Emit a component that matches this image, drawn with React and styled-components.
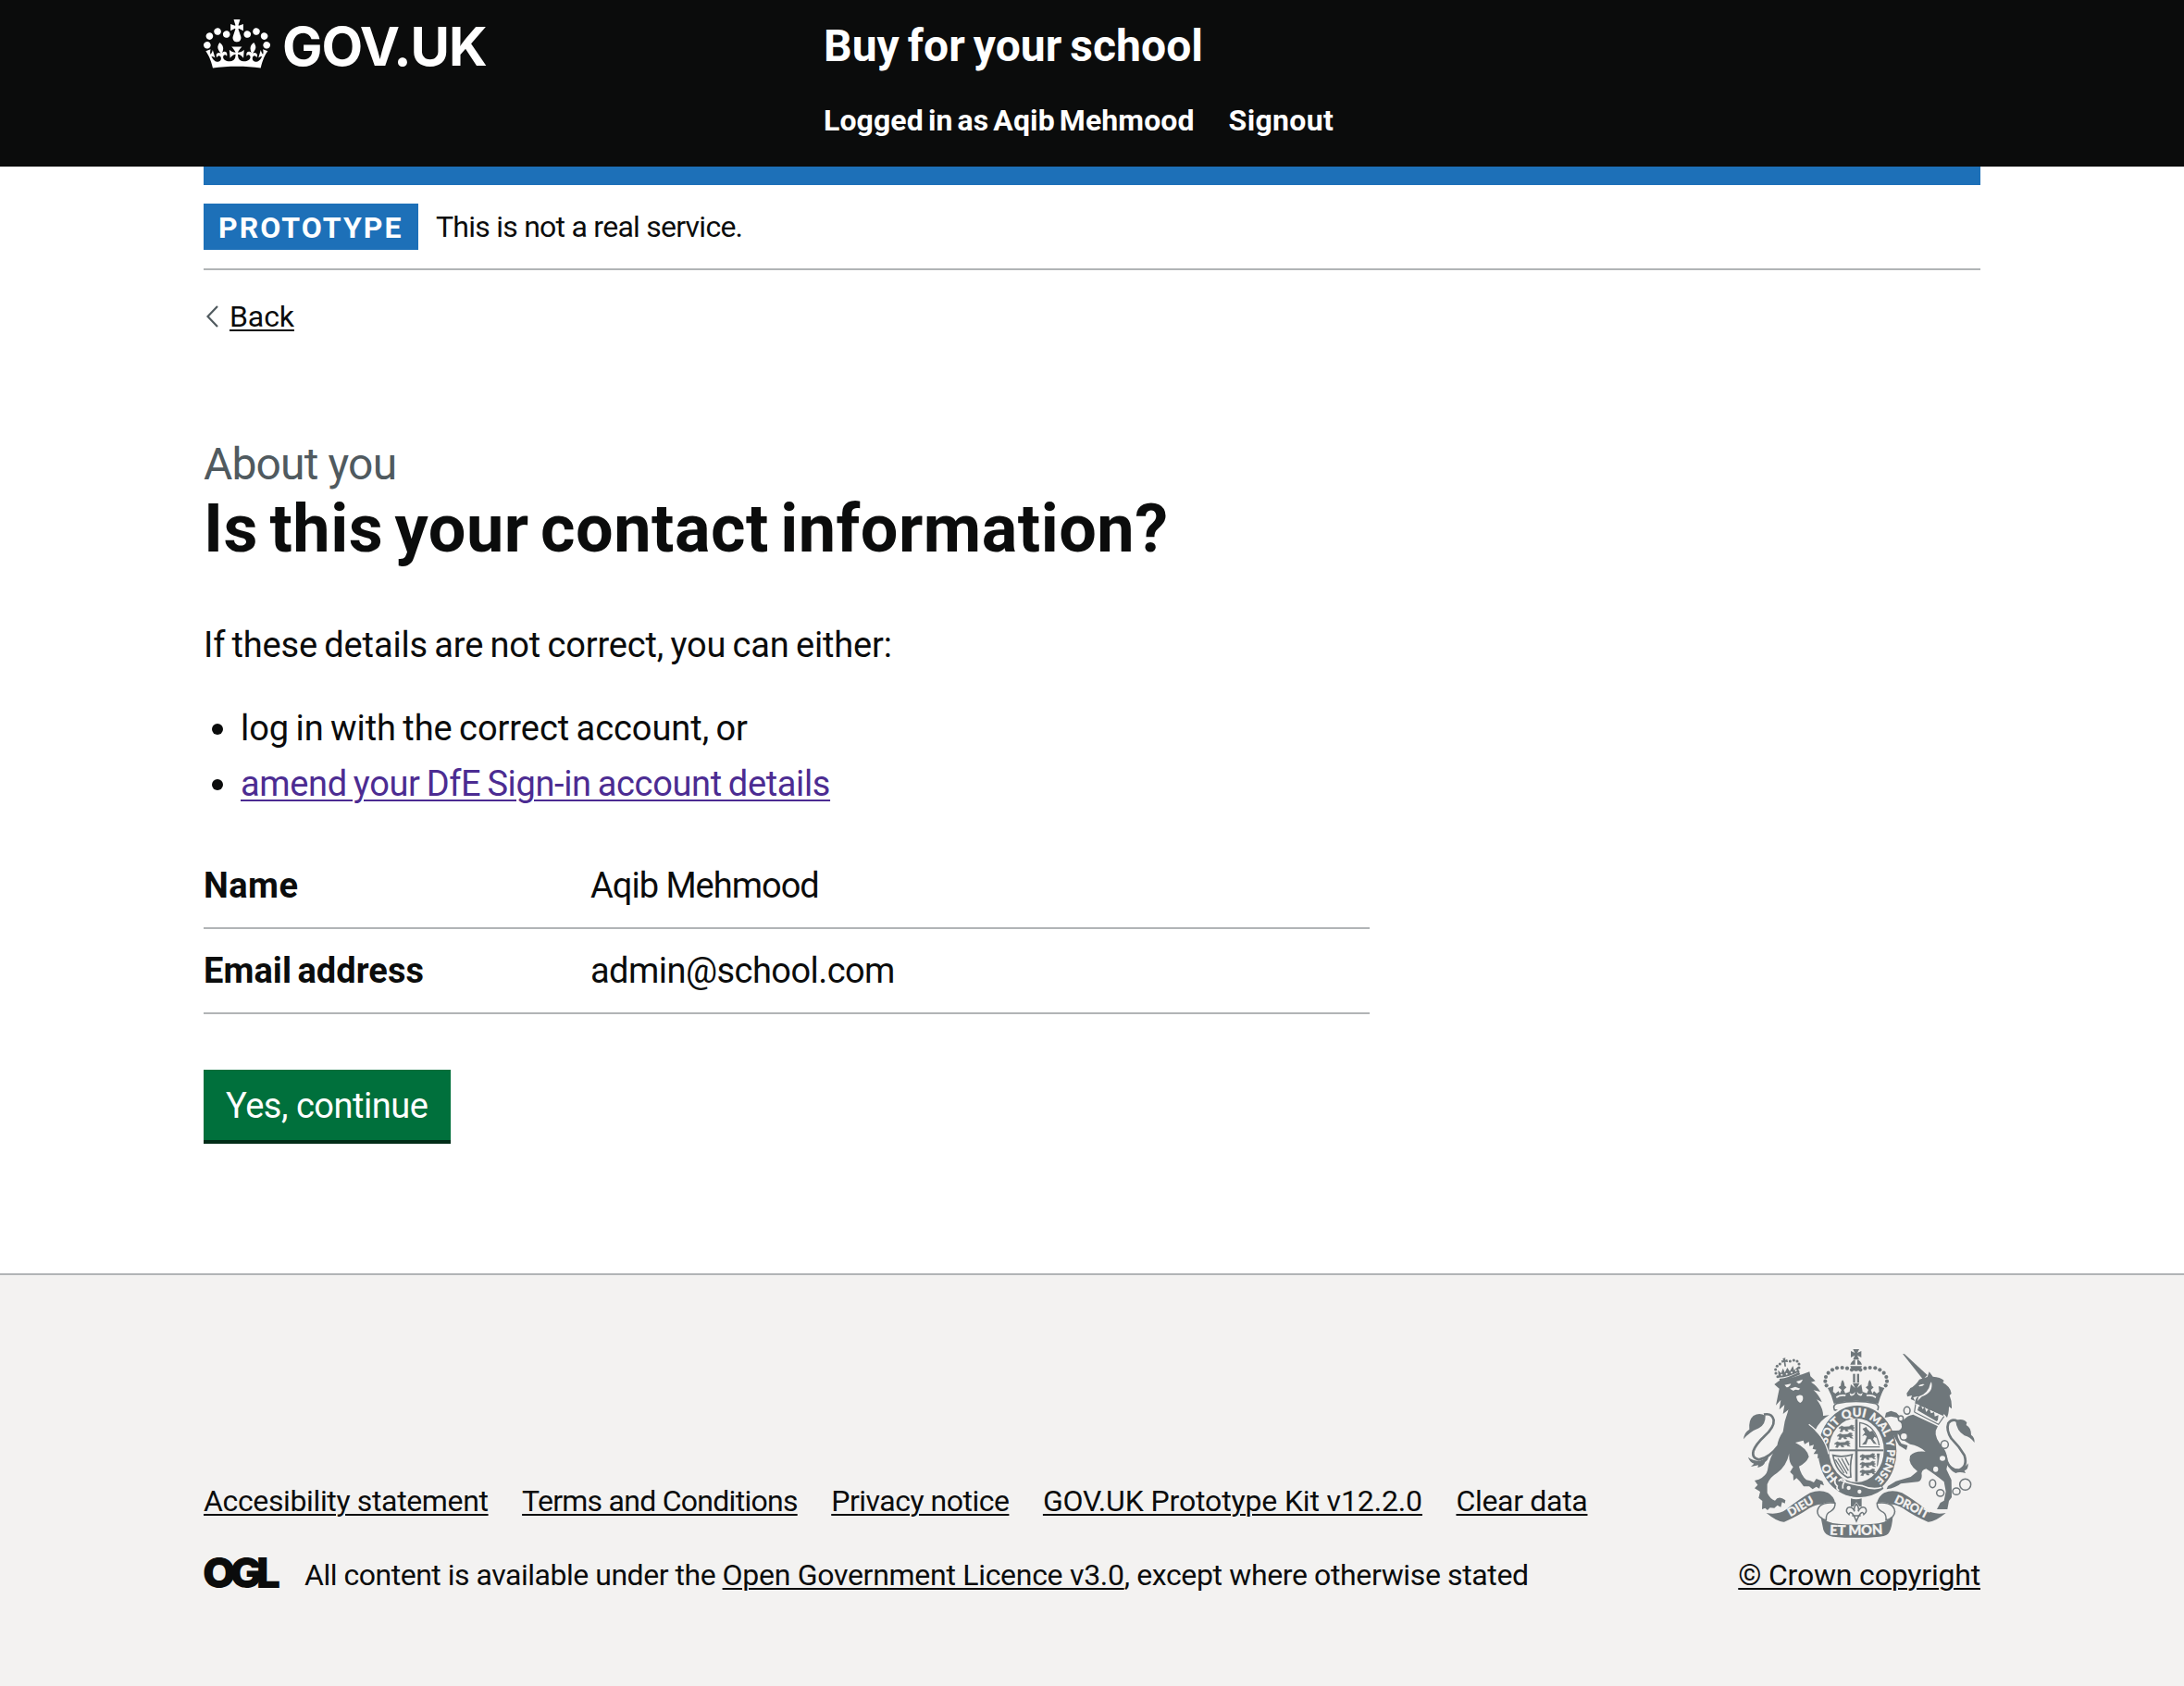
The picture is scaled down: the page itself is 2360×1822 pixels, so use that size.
import React from "react";
import styled, { createGlobalStyle, css } from "styled-components";

const ink = "#0b0c0c";
const blue = "#1d70b8";
const rule = "#b1b4b6";
const canvas = "#f3f2f1";
const crestGrey = "#6f777b";

const GlobalStyle = createGlobalStyle`
  *, *::before, *::after { box-sizing: border-box; }
  body {
    margin: 0;
    background: #fff;
    color: ${ink};
    font-family: Roboto, "Liberation Sans", Arial, sans-serif;
    font-kerning: normal;
  }
`;

const tracked = css`
  letter-spacing: ${(p) => p.$track || 0}px;
  word-spacing: ${(p) => p.$gap || 0}px;
`;

const body = css`
  font-size: 38px;
  line-height: 50px;
`;

const small = css`
  font-size: 32px;
  line-height: 40px;
`;

const underlined = css`
  text-decoration: underline;
  text-decoration-thickness: 2px;
  text-underline-offset: ${(p) => p.$offset || 3}px;
`;

const Page = styled.div`
  display: flex;
  flex-direction: column;
  min-height: 1822px;
`;

const Container = styled.div`
  width: 1920px;
  margin: 0 auto;
`;

const Header = styled.header`
  height: 180px;
  background: ${ink};
  color: #fff;
`;

const HeaderRow = styled(Container)`
  display: flex;
  padding-top: 20px;
`;

const LogoLink = styled.a`
  display: flex;
  align-items: flex-start;
  gap: 13px;
  width: 670px;
  color: #fff;
  text-decoration: none;
`;

const CrownSvg = styled.svg`
  width: 72px;
  height: 53px;
  margin-top: 1px;
  fill: currentColor;
`;

const LogoText = styled.span`
  font: 700 58px/60px Inter, "Liberation Sans", sans-serif;
  letter-spacing: -1.1px;
`;

const HeaderContent = styled.div`
  display: flex;
  flex-direction: column;
  gap: 30px;
`;

const ServiceName = styled.a`
  font-size: 48px;
  font-weight: 700;
  line-height: 60px;
  ${tracked}
`;

const HeaderNav = styled.nav`
  display: flex;
  gap: 37px;
`;

const NavItem = styled.a`
  ${small}
  font-weight: 700;
  white-space: nowrap;
  ${tracked}
`;

const BlueBar = styled(Container)`
  height: 20px;
  background: ${blue};
`;

const PhaseBanner = styled(Container)`
  display: flex;
  align-items: center;
  gap: 19px;
  padding: 20px 0;
  border-bottom: 2px solid ${rule};
`;

const Tag = styled.strong`
  width: 232px;
  height: 50px;
  padding: 2px 0 0 16px;
  background: ${blue};
  color: #fff;
  font-size: 32px;
  font-weight: 700;
  line-height: 48px;
  ${tracked}
`;

const PhaseText = styled.span`
  font-size: 32px;
  line-height: 50px;
  ${tracked}
`;

const BackRow = styled(Container)`
  display: flex;
  align-items: center;
  gap: 12px;
  margin-top: 30px;
  padding-left: 3px;
`;

const Chevron = styled.svg`
  width: 13px;
  height: 24px;
  fill: none;
  stroke: #505a5f;
  stroke-width: 2.2;
`;

const SmallLink = styled.a`
  ${small}
  color: ${ink};
  white-space: nowrap;
  ${underlined}
  ${tracked}
`;

const Main = styled.main`
  width: 1920px;
  margin: 110px auto 0;
  padding-bottom: 144px;
`;

const Caption = styled.span`
  display: block;
  color: #505a5f;
  font-size: 48px;
  line-height: 60px;
  ${tracked}
`;

const Heading = styled.h1`
  margin: 0 0 60px;
  font-size: 72px;
  font-weight: 700;
  line-height: 80px;
  ${tracked}
`;

const Paragraph = styled.p`
  ${body}
  margin: 0 0 40px;
  ${tracked}
`;

const BulletList = styled.ul`
  display: flex;
  flex-direction: column;
  gap: 10px;
  margin: 0 0 40px;
  padding: 0 0 0 9px;
  list-style: none;
`;

const Bullet = styled.li`
  ${body}
  display: flex;
  align-items: center;
  gap: 19px;
  ${tracked}

  &::before {
    content: "";
    width: 12px;
    height: 12px;
    margin-top: 2px;
    border-radius: 50%;
    background: ${ink};
  }
`;

const VisitedLink = styled.a`
  color: #4c2c92;
  ${underlined}
`;

const SummaryList = styled.dl`
  width: 1260px;
  margin: 0 0 60px;
`;

const SummaryRow = styled.div`
  ${body}
  display: grid;
  grid-template-columns: 418px 1fr;
  padding: 20px 0;
  border-bottom: 2px solid ${rule};
`;

const Term = styled.dt`
  font-weight: 700;
  ${tracked}
`;

const Value = styled.dd`
  margin: 0;
  ${tracked}
`;

const Button = styled.button`
  display: block;
  width: 267px;
  height: 76px;
  padding: 2px 0 0 24px;
  border: 0;
  background: #00703c;
  box-shadow: 0 4px 0 #002d18;
  color: #fff;
  font: 400 38px/74px Roboto, "Liberation Sans", sans-serif;
  text-align: left;
  white-space: nowrap;
  ${tracked}
`;

const Footer = styled.footer`
  flex: 1;
  border-top: 2px solid ${rule};
  background: ${canvas};
`;

const FooterRow = styled(Container)`
  display: flex;
  justify-content: space-between;
  align-items: flex-end;
  padding-top: 78px;
`;

const FooterMeta = styled.div`
  display: flex;
  flex-direction: column;
  gap: 40px;
`;

const FooterLinks = styled.nav`
  display: flex;
  gap: 36.5px;
`;

const Licence = styled.div`
  display: flex;
  align-items: flex-start;
`;

const OglMark = styled.span`
  width: 109px;
  margin-left: -1px;
  margin-right: 1px;
  font: 900 46px/34px Inter, "Liberation Sans", sans-serif;
  letter-spacing: -6.2px;
`;

const LicenceText = styled.span`
  ${small}
  white-space: pre;
  ${tracked}
`;

const CrestColumn = styled.div`
  display: flex;
  flex-direction: column;
  align-items: flex-end;
  gap: 18px;
  width: 262px;
`;

const CrestSvg = styled.svg`
  width: 262px;
  height: 208px;
`;

const Motto = styled.text`
  fill: ${canvas};
  stroke: ${canvas};
  stroke-width: 0.9px;
  font-family: Lato, "Liberation Sans", sans-serif;
  font-weight: 900;
  font-size: ${(p) => p.$size || 37}px;
  text-anchor: middle;
`;

function Crown() {
  return (
    <CrownSvg viewBox="0 0 132 97" aria-hidden="true">
      <path d="M25 30.2c3.5 1.5 7.7-.2 9.1-3.7 1.5-3.6-.2-7.8-3.9-9.2-3.6-1.4-7.6.3-9.1 3.9-1.4 3.5.3 7.5 3.9 9zM9 39.5c3.6 1.5 7.8-.2 9.2-3.7 1.5-3.6-.2-7.8-3.9-9.1-3.6-1.5-7.6.2-9.1 3.8-1.4 3.5.3 7.5 3.8 9zM4.4 57.2c3.5 1.5 7.7-.2 9.1-3.8 1.5-3.6-.2-7.7-3.9-9.1-3.5-1.5-7.6.3-9.1 3.8-1.4 3.5.3 7.6 3.9 9.1zm38.3-21.4c3.5 1.5 7.7-.2 9.1-3.8 1.5-3.6-.2-7.7-3.9-9.1-3.6-1.5-7.6.3-9.1 3.8-1.3 3.6.4 7.7 3.9 9.1zm64.4-5.6c-3.6 1.5-7.8-.2-9.1-3.7-1.5-3.6.2-7.8 3.8-9.2 3.6-1.4 7.7.3 9.2 3.9 1.3 3.5-.4 7.5-3.9 9zm15.9 9.3c-3.6 1.5-7.7-.2-9.1-3.7-1.5-3.6.2-7.8 3.7-9.1 3.6-1.5 7.7.2 9.2 3.8 1.5 3.5-.3 7.5-3.8 9zm4.7 17.7c-3.6 1.5-7.8-.2-9.2-3.8-1.5-3.6.2-7.7 3.9-9.1 3.6-1.5 7.7.3 9.2 3.8 1.3 3.5-.4 7.6-3.9 9.1zM89.3 35.8c-3.6 1.5-7.8-.2-9.2-3.8-1.4-3.6.2-7.7 3.9-9.1 3.6-1.5 7.7.3 9.2 3.8 1.4 3.6-.3 7.7-3.9 9.1zM69.7 17.7l8.9 4.7V9.3l-8.9 2.8c-.2-.3-.5-.6-.9-.9L72.4 0H59.6l3.5 11.2c-.3.3-.6.5-.9.9l-8.8-2.8v13.1l8.8-4.7c.3.3.6.7.9.9l-5 15.4v.1c-.2.8-.4 1.6-.4 2.4 0 4.1 3.1 7.5 7 8.1h.2c.3 0 .7.1 1 .1.4 0 .7 0 1-.1h.2c4-.6 7.1-4.1 7.1-8.1 0-.8-.1-1.7-.4-2.4V34l-5.1-15.4c.4-.2.7-.6 1-.9zM66 92.8c16.9 0 32.8 1.1 47.1 3.2 4-16.9 8.9-26.7 14-33.5l-9.6-3.4c1 4.9 1.1 7.2 0 10.2-1.5-1.4-3-4.3-4.2-8.7L108.6 76c2.8-2 5-3.2 7.5-3.3-4.4 9.4-10 11.9-13.6 11.2-4.3-.8-6.3-4.6-5.6-7.9 1-4.7 5.7-5.9 8-.5 4.3-8.7-3-11.4-7.6-8.8 7.1-7.2 7.9-13.5 2.1-21.1-8 6.1-8.1 12.3-4.5 20.8-4.7-5.4-12.1-2.5-9.5 6.2 3.4-5.2 7.9-2 7.2 3.1-.6 4.3-6.4 7.8-13.5 7.2-10.3-.9-10.9-8-11.2-13.8 2.5-.5 7.1 1.8 11 7.3L80.2 60c-4.1 4.4-8 5.3-12.3 5.4 1.4-4.4 8-11.6 8-11.6H55.5s6.4 7.2 7.9 11.6c-4.2-.1-8-1-12.3-5.4l1.4 16.4c3.9-5.5 8.5-7.7 10.9-7.3-.3 5.8-.9 12.8-11.1 13.8-7.2.6-12.9-2.9-13.5-7.2-.7-5 3.8-8.3 7.1-3.1 2.7-8.7-4.6-11.6-9.4-6.2 3.7-8.5 3.6-14.7-4.6-20.8-5.8 7.6-5 13.9 2.2 21.1-4.7-2.6-11.9.1-7.7 8.8 2.3-5.5 7.1-4.2 8.1.5.7 3.3-1.3 7.1-5.7 7.9-3.5.7-9-1.8-13.5-11.2 2.5.1 4.7 1.3 7.5 3.3l-4.7-15.4c-1.2 4.4-2.7 7.2-4.3 8.7-1.1-3-.9-5.3 0-10.2l-9.5 3.4c5 6.9 9.9 16.7 14 33.5 14.8-2.1 30.8-3.2 47.7-3.2z" />
    </CrownSvg>
  );
}

const arch = [
  [423, 121], [408, 116], [392, 114], [375, 115], [360, 121],
  [347, 131], [339, 144], [337, 158], [341, 172],
];

const lionCrownPearls = [
  [183, 143], [177, 132], [176, 120], [181, 109], [190, 102],
  [223, 93], [235, 90], [246, 93], [252, 102], [252, 114], [249, 126],
];

function Guardant({ x, y }) {
  return (
    <path
      transform={`translate(${x} ${y})`}
      d="M2 8 L10 3 L18 6 L34 5 L42 0 L50 2 L46 6 L52 9 L46 13 L52 18 L44 17 L40 13 L28 14 L32 20 L24 20 L20 14 L14 16 L12 22 L4 21 L8 16 L6 10 L2 12 Z"
    />
  );
}

function Lion() {
  return (
    <g>
      <path
        d="M184 368 Q158 404 122 412 Q98 408 104 384 Q112 362 140 336 Q172 308 170 284 Q164 260 138 266"
        fill="none"
        stroke={crestGrey}
        strokeWidth="8"
      />
      <path d="M72 346 Q74 324 91 314 Q88 284 104 270 Q124 258 143 270 Q144 298 122 310 Q92 322 72 346 Z" />
      <path d="M87 404 Q102 416 124 416 Q146 410 154 396 Q154 412 142 420 Q138 434 118 438 L120 430 L96 435 L106 425 Q92 420 87 404 Z" />
      <path d="M172 168 L187 157 Q235 147 286 127 L289 142 L305 157 L291 161 Q310 172 321 192 L299 187 Q317 203 326 226 L309 217 Q331 246 330 270 L350 268 Q320 284 304 318 Q332 344 343 378 L345 406 L338 400 L330 412 L323 402 L312 409 L313 394 L299 394 L308 380 L296 377 L300 364 L286 368 L284 354 L270 362 L266 350 L240 357 Q279 376 284 403 Q275 424 252 434 Q258 462 276 478 Q290 480 300 486 L308 474 L328 482 L333 496 L322 492 L318 506 L308 500 L296 508 L285 499 L267 499 Q256 482 244 472 L234 480 L233 462 L223 452 L233 436 Q218 424 220 392 Q212 432 180 456 Q156 470 149 492 L149 520 Q158 540 174 545 Q186 526 208 544 L206 554 L197 550 L193 566 L182 560 L172 569 L158 568 L150 576 L142 569 L132 573 L133 546 L121 536 L126 516 L108 505 L118 494 L108 480 L122 476 Q146 464 150 446 Q156 402 180 372 Q184 344 200 322 Q204 286 218 250 L200 264 L205 234 L188 250 L193 218 L177 236 L188 182 Z" />
      <g fill={canvas}>
        <path d="M205 170 L226 166 Q222 177 212 178 Z M243 159 L264 152 Q260 164 250 166 Z" />
        <path d="M222 182 L240 176 L256 182 L250 187 Q240 182 234 189 Z" />
        <path d="M243 207 Q254 198 264 206 Q268 220 256 228 Q245 223 243 207 Z" />
      </g>
      <path
        d="M284 298 Q336 336 348 394"
        fill="none"
        stroke={canvas}
        strokeWidth="4"
      />
      <path d="M188 150 Q220 146 252 128 L256 136 Q224 152 190 158 Z" />
      <path d="M186 146 L184 122 L194 132 L200 116 L206 130 L214 114 L222 126 L232 108 L236 122 L250 110 L250 128 Q218 144 186 146 Z" />
      <g fill={canvas}>
        <circle cx="196" cy="137" r="3" />
        <circle cx="212" cy="134" r="3" />
        <circle cx="228" cy="130" r="3" />
        <circle cx="242" cy="123" r="3" />
      </g>
      {lionCrownPearls.map(([x, y]) => (
        <circle key={`${x}-${y}`} cx={x} cy={y} r="4.6" />
      ))}
      <path d="M199 84 L208 82 L207 89 L214 87 L216 96 L208 95 L210 110 L205 110 L203 96 L196 98 L195 90 L201 91 Z" />
    </g>
  );
}

function RoyalCrown() {
  return (
    <g>
      <path d="M427 54 H447 L441 66 L454 60 V81 L441 74 L447 88 H427 L433 74 L420 81 V60 L433 66 Z" />
      <path d="M418 104 Q424 90 434 88 V104 Z M441 88 Q452 92 456 104 H441 Z M418 109 H456 Q452 124 437 126 Q422 124 418 109 Z" />
      <rect x="427" y="134" width="7" height="28" />
      <rect x="440" y="134" width="7" height="28" />
      {arch.map(([x, y]) => (
        <React.Fragment key={`${x}-${y}`}>
          <circle cx={x} cy={y} r="6.2" />
          <circle cx={874 - x} cy={y} r="6.2" />
        </React.Fragment>
      ))}
      <path d="M345 180 L364 174 L362 192 L370 198 L380 190 L384 198 L390 186 L380 178 L388 172 Q386 162 393 154 Q401 162 399 172 L406 178 L397 186 L402 197 L416 192 L420 168 L434 180 L426 164 H448 L440 180 L454 168 L458 192 L472 197 L477 186 L468 178 L476 172 Q474 162 481 154 Q489 162 487 172 L494 178 L485 186 L490 198 L495 190 L504 198 L512 192 L510 174 L529 180 Q516 202 509 231 Q437 212 365 231 Q358 202 345 180 Z" />
      <g fill={canvas}>
        <path d="M372 208 Q385 198 404 202 L402 207 Q384 205 374 213 Z M470 202 Q489 198 502 208 L500 213 Q490 205 472 207 Z" />
        <path d="M416 194 Q424 206 434 192 L432 200 Q424 208 418 204 Z M458 194 Q450 206 440 192 L442 200 Q450 208 456 204 Z" />
      </g>
      <path
        d="M374 230 Q360 236 367 251 L382 254 Q437 224 492 254 L507 251 Q514 236 500 230 Q437 216 374 230 Z"
        fill={canvas}
        stroke={crestGrey}
        strokeWidth="5"
      />
    </g>
  );
}

function Garter() {
  return (
    <g>
      <ellipse cx="441" cy="385" rx="133" ry="154" fill={canvas} />
      <ellipse cx="441" cy="385" rx="127" ry="148" />
      <ellipse cx="438" cy="382" rx="89" ry="104" fill={canvas} />
      <rect x="434" y="280" width="8" height="204" />
      <rect x="350" y="379" width="176" height="6" />
      <g stroke={crestGrey} strokeWidth="1.5">
        <Guardant x={380} y={300} />
        <Guardant x={375} y={325} />
        <Guardant x={366} y={351} />
        <Guardant x={448} y={392} />
        <Guardant x={448} y={417} />
        <Guardant x={448} y={442} />
      </g>
      <path d="M504 392 L514 392 L508 430 L504 436 L506 412 Z" />
      <path d="M449 290 V371 H514 M449 292 Q500 300 512 366" fill="none" stroke={crestGrey} strokeWidth="4" />
      <path d="M458 312 L470 306 L474 314 L482 322 L490 318 L496 326 L504 342 L496 338 L492 346 L504 362 L494 360 L484 346 L476 346 L470 362 L456 364 L466 352 L472 336 L464 332 L456 336 L466 324 Z" />
      <path d="M362 398 Q392 406 424 396 Q416 430 420 468 L410 470 Q372 452 362 398 Z" fill="none" stroke={crestGrey} strokeWidth="5" />
      <path d="M378 408 L408 458 M390 408 L412 448 M402 406 L414 430 M370 412 L398 456" fill="none" stroke={crestGrey} strokeWidth="4" />
      <path d="M372 484 Q406 474 440 500 Q476 508 520 494 L526 506 Q490 536 440 534 Q396 528 372 504 Z" />
      <path d="M384 478 Q430 496 458 497 Q492 512 520 502" fill="none" stroke={canvas} strokeWidth="5" />
      <path d="M372 470 Q362 486 376 498 Q372 508 382 512 M380 482 Q394 466 402 482 Q392 490 394 506" fill="none" stroke={canvas} strokeWidth="5" />
      <g fill={canvas}>
        <circle cx="413" cy="504" r="6.5" />
        <circle cx="448" cy="516" r="6.5" />
      </g>
      <path id="garter-line" d="M440 497 A98 112 0 0 1 440 273 A98 112 0 0 1 440 497" fill="none" />
      <Motto $size={37}><textPath href="#garter-line" startOffset="98">HO</textPath></Motto>
      <Motto $size={37}><textPath href="#garter-line" startOffset="230">SOIT</textPath></Motto>
      <Motto $size={39}><textPath href="#garter-line" startOffset="320">QUI</textPath></Motto>
      <Motto $size={37}><textPath href="#garter-line" startOffset="408">MAL</textPath></Motto>
      <Motto $size={33}><textPath href="#garter-line" startOffset="470">Y</textPath></Motto>
      <Motto $size={35}><textPath href="#garter-line" startOffset="543">PENSE</textPath></Motto>
    </g>
  );
}

function Unicorn() {
  return (
    <g>
      <path d="M588 69 L594 70 L668 138 L654 152 Z" />
      <path d="M601 197 L613 180 Q630 172 642 152 L668 144 L674 127 L686 143 Q710 144 722 156 L718 162 Q744 176 746 198 L740 204 Q748 222 747 247 L738 240 Q738 262 732 276 L722 264 L714 280 L700 262 L692 268 L680 252 L670 258 L660 242 L648 248 L640 234 L628 230 Q628 212 640 206 L622 210 L628 222 L614 216 L618 204 L603 208 Z" />
      <path d="M681 160 Q690 194 650 208 L636 222 L640 208 Q672 196 678 164 Z" fill={canvas} />
      <path d="M640 172 Q650 165 659 168 Q653 175 642 175 Z" fill={canvas} />
      <path d="M628 230 L724 272 L706 300 L624 260 Z" fill={canvas} />
      <path d="M626 258 L704 298 L722 272 M630 232 L626 258" fill="none" stroke={crestGrey} strokeWidth="3.5" />
      <path d="M636 252 L640 240 L648 236 L652 248 L660 242 L664 258 L674 246 L680 262 L690 258 L692 272 L704 268 L702 284 L698 288 Z" />
      <path d="M622 266 L702 304 Q684 330 710 362 Q742 392 730 444 L746 478 L747 534 L738 546 L733 573 L699 573 L710 552 L722 545 L728 516 L722 484 Q690 458 664 442 Q646 446 650 464 Q650 480 638 484 L582 490 Q566 504 536 508 L540 498 L566 482 L614 468 L636 450 Q604 426 612 400 Q626 382 662 386 Q640 366 612 362 Q586 350 572 328 Q570 342 584 360 L604 366 L600 381 L576 366 L550 318 L566 318 Q590 318 584 296 L570 276 L550 272 L530 276 L534 260 L550 254 L568 260 L590 284 Q604 268 622 266 Z" />
      <path
        d="M728 404 Q736 448 770 446 Q800 436 788 398 Q772 370 746 344 Q728 316 736 294 Q748 278 766 288"
        fill="none"
        stroke={crestGrey}
        strokeWidth="8"
      />
      <path d="M760 286 Q782 276 796 292 L794 300 Q810 308 810 332 Q822 340 821 357 Q806 338 788 334 Q762 318 760 286 Z" />
      <path d="M734 418 Q744 440 770 444 Q790 440 800 424 Q802 444 788 448 L792 456 Q772 450 760 456 Q740 450 734 418 Z" />
      <g fill={canvas}>
        <ellipse cx="717" cy="408" rx="9" ry="8" />
        <ellipse cx="695" cy="443" rx="8" ry="9" />
      </g>
      <g fill={canvas} stroke={crestGrey} strokeWidth="4.5">
        <ellipse cx="602" cy="253" rx="10" ry="12" />
        <ellipse cx="582" cy="279" rx="8" ry="9" />
        <ellipse cx="592" cy="337" rx="12" ry="12" />
        <ellipse cx="724" cy="363" rx="12" ry="13" />
        <ellipse cx="685" cy="490" rx="10" ry="13" />
        <ellipse cx="710" cy="520" rx="12" ry="11" />
        <ellipse cx="762" cy="515" rx="12" ry="11" />
        <circle cx="791" cy="493" r="18" />
      </g>
    </g>
  );
}

function RibbonEnd() {
  return (
    <g>
      <path d="M146 585 Q186 592 210 574 Q256 538 288 520 Q320 508 346 520 Q366 532 369 553 Q346 546 324 557 Q310 556 286 569 Q250 594 204 614 Q184 616 146 585 Z" />
      <path
        d="M369 553 Q338 548 320 562 Q304 580 318 596 Q328 606 340 608 Q338 586 354 580 Q370 572 369 553 Z"
        fill={canvas}
        stroke={crestGrey}
        strokeWidth="4.5"
      />
    </g>
  );
}

function Ribbon() {
  return (
    <g>
      <RibbonEnd />
      <g transform="translate(874 0) scale(-1 1)">
        <RibbonEnd />
      </g>
      <path d="M322 596 Q340 618 380 620 Q437 626 494 620 Q534 618 556 596 Q554 630 544 648 Q538 660 512 662 Q437 669 362 662 Q338 660 331 640 Z" />
      <path id="ribbon-left" d="M206 609 Q260 576 322 542" fill="none" />
      <path id="ribbon-base" d="M345 655 Q437 660 530 653" fill="none" />
      <path id="ribbon-right" d="M544 543 Q610 574 680 612" fill="none" />
      <Motto $size={38}><textPath href="#ribbon-left" startOffset="50%">DIEU</textPath></Motto>
      <Motto $size={44}><textPath href="#ribbon-base" startOffset="50%">ET MON</textPath></Motto>
      <Motto $size={38}><textPath href="#ribbon-right" startOffset="50%">DROIT</textPath></Motto>
      <path d="M420 538 Q437 544 455 538 V564 H448 L438 550 L428 564 H420 Z" />
      <path
        d="M438 556 Q428 568 432 580 Q424 562 410 568 Q400 580 414 590 Q416 580 424 586 L430 594 L438 612 L446 594 L452 586 Q460 580 462 590 Q476 580 466 568 Q452 562 444 580 Q448 568 438 556 Z M424 594 H452"
        fill={canvas}
        stroke={crestGrey}
        strokeWidth="4.5"
      />
    </g>
  );
}

function Crest() {
  return (
    <CrestSvg viewBox="54 48 786 624" fill={crestGrey} aria-hidden="true">
      <RoyalCrown />
      <Garter />
      <Lion />
      <Unicorn />
      <Ribbon />
    </CrestSvg>
  );
}

const details = [
  { term: "Name", termTrack: 0.45, value: "Aqib Mehmood", valueTrack: -1 },
  { term: "Email address", termTrack: 0.05, value: "admin@school.com", valueTrack: -0.55 },
];

const footerLinks = [
  { label: "Accesibility statement", track: -0.36 },
  { label: "Terms and Conditions", track: -0.73 },
  { label: "Privacy notice", track: -0.5 },
  { label: "GOV.UK Prototype Kit v12.2.0", track: -0.14 },
  { label: "Clear data", track: -0.31 },
];

export default function App() {
  return (
    <Page>
      <GlobalStyle />
      <Header>
        <HeaderRow>
          <LogoLink>
            <Crown />
            <LogoText>GOV.UK</LogoText>
          </LogoLink>
          <HeaderContent>
            <ServiceName $track={0.05} $gap={-3}>Buy for your school</ServiceName>
            <HeaderNav>
              <NavItem $track={0.1} $gap={-3}>Logged in as Aqib Mehmood</NavItem>
              <NavItem $track={0.33}>Signout</NavItem>
            </HeaderNav>
          </HeaderContent>
        </HeaderRow>
      </Header>
      <BlueBar />
      <PhaseBanner>
        <Tag $track={2.05}>PROTOTYPE</Tag>
        <PhaseText $track={-0.75}>This is not a real service.</PhaseText>
      </PhaseBanner>
      <BackRow>
        <Chevron viewBox="0 0 13 24">
          <path d="M12 1 L1.5 12 L12 23" />
        </Chevron>
        <SmallLink $track={-0.1}>Back</SmallLink>
      </BackRow>
      <Main>
        <Caption $track={-0.85}>About you</Caption>
        <Heading $track={0.5} $gap={-6}>Is this your contact information?</Heading>
        <Paragraph $track={-0.15} $gap={-2}>If these details are not correct, you can either:</Paragraph>
        <BulletList>
          <Bullet $track={-0.05} $gap={-2}>log in with the correct account, or</Bullet>
          <Bullet $track={-0.36} $gap={-2}>
            <VisitedLink $offset={4}>amend your DfE Sign-in account details</VisitedLink>
          </Bullet>
        </BulletList>
        <SummaryList>
          {details.map((d) => (
            <SummaryRow key={d.term}>
              <Term $track={d.termTrack} $gap={-3}>{d.term}</Term>
              <Value $track={d.valueTrack}>{d.value}</Value>
            </SummaryRow>
          ))}
        </SummaryList>
        <Button $track={-0.48}>Yes, continue</Button>
      </Main>
      <Footer>
        <FooterRow>
          <FooterMeta>
            <FooterLinks>
              {footerLinks.map((l) => (
                <SmallLink key={l.label} $track={l.track}>{l.label}</SmallLink>
              ))}
            </FooterLinks>
            <Licence>
              <OglMark>OGL</OglMark>
              <LicenceText $track={-0.48}>{"All content is available under the "}</LicenceText>
              <SmallLink $track={-0.29}>Open Government Licence v3.0</SmallLink>
              <LicenceText $track={-0.37}>, except where otherwise stated</LicenceText>
            </Licence>
          </FooterMeta>
          <CrestColumn>
            <Crest />
            <SmallLink $track={-0.19}>© Crown copyright</SmallLink>
          </CrestColumn>
        </FooterRow>
      </Footer>
    </Page>
  );
}
